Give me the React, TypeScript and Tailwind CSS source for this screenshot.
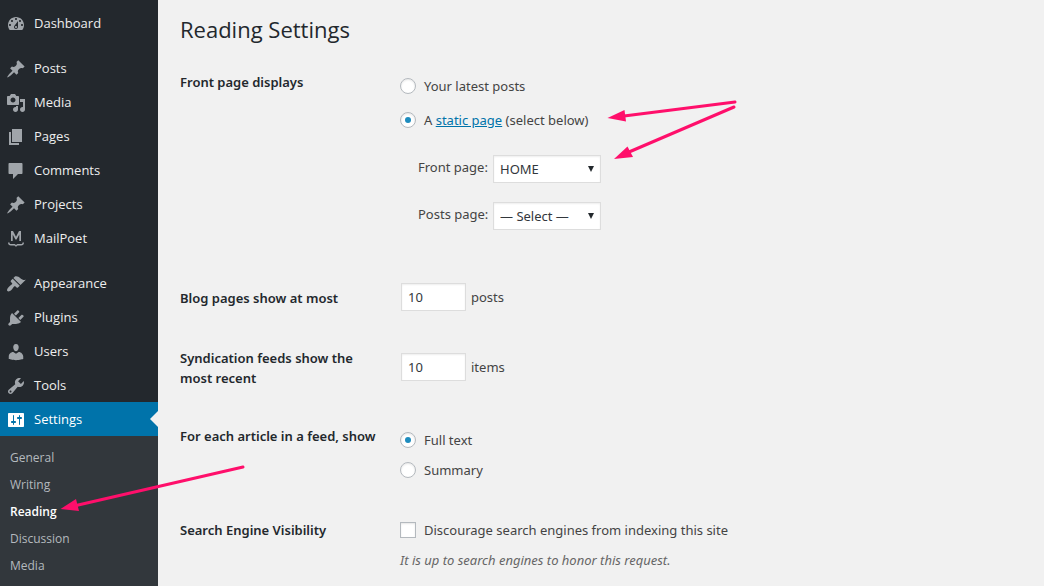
import { JSX, ReactNode } from 'react';

interface MenuItem {
    name: string;
    icon: string;
    active?: boolean;
}

const PIN_ICON =
    'M10.44 3.02l1.82-1.82 6.36 6.35-1.83 1.82c-1.05-.68-2.48-.57-3.41.36l-.75.75c-.92.93-1.04 2.35-.35 3.41l-1.83 1.82-2.41-2.41-2.8 2.79c-.42.42-3.38 2.71-3.8 2.29s1.86-3.39 2.28-3.81l2.79-2.79L4.1 9.36l1.83-1.82c1.05.69 2.48.57 3.4-.36l.75-.75c.93-.92 1.05-2.35.36-3.41z';

// Each inner array is one block of the menu, blocks are separated by a gap
const menuGroups: MenuItem[][] = [
    [
        {
            name: 'Dashboard',
            icon: 'M3.76 16h12.48c1.1-1.37 1.76-3.11 1.76-5 0-4.42-3.58-8-8-8s-8 3.58-8 8c0 1.89.66 3.63 1.76 5zM10 4c.55 0 1 .45 1 1s-.45 1-1 1-1-.45-1-1 .45-1 1-1zM6 6c.55 0 1 .45 1 1s-.45 1-1 1-1-.45-1-1 .45-1 1-1zm8 0c.55 0 1 .45 1 1s-.45 1-1 1-1-.45-1-1 .45-1 1-1zm-5.37 5.55L12 7v6c0 1.1-.9 2-2 2s-2-.9-2-2c0-.57.24-1.08.63-1.45zM4 10c.55 0 1 .45 1 1s-.45 1-1 1-1-.45-1-1 .45-1 1-1zm12 0c.55 0 1 .45 1 1s-.45 1-1 1-1-.45-1-1 .45-1 1-1zm-5 3c0-.55-.45-1-1-1s-1 .45-1 1 .45 1 1 1 1-.45 1-1z',
        },
    ],
    [
        { name: 'Posts', icon: PIN_ICON },
        {
            name: 'Media',
            icon: 'M13 11V4c0-.55-.45-1-1-1h-1.67L9 1H5L3.67 3H2c-.55 0-1 .45-1 1v7c0 .55.45 1 1 1h10c.55 0 1-.45 1-1zM7 4.5c1.38 0 2.5 1.12 2.5 2.5S8.38 9.5 7 9.5 4.5 8.38 4.5 7 5.62 4.5 7 4.5zM14 6h5v10.5c0 1.38-1.12 2.5-2.5 2.5S14 17.88 14 16.5s1.12-2.5 2.5-2.5c.17 0 .34.02.5.05V9h-3V6zm-4 8.05V13h2v3.5c0 1.38-1.12 2.5-2.5 2.5S7 17.88 7 16.5 8.12 14 9.5 14c.17 0 .34.02.5.05z',
        },
        { name: 'Pages', icon: 'M6 15V2h10v13H6zm-1 1h8v2H3V5h2v11z' },
        {
            name: 'Comments',
            icon: 'M3.5 2h12c.55 0 1 .45 1 1v9c0 .55-.45 1-1 1H12l-5 5v-5H3.5c-.55 0-1-.45-1-1V3c0-.55.45-1 1-1z',
        },
        { name: 'Projects', icon: PIN_ICON },
        {
            name: 'MailPoet',
            icon: 'M5 12V2h2l3 5.8L13 2h2v10h-1.700V5.600L10.600 10.600H9.400L6.700 5.600V12zM2 13.500h1.500c0 1 .5 1.500 1.500 1.500h2.700c1.200 0 1.900.4 2.300 1.200.4-.8 1.100-1.200 2.300-1.200H15c1 0 1.500-.5 1.500-1.500H18c0 2-1.100 3-2.900 3h-2.600c-1.100 0-1.700.4-2.500 1.600-.8-1.200-1.400-1.600-2.500-1.600H4.900c-1.800 0-2.900-1-2.900-3z',
        },
    ],
    [
        {
            name: 'Appearance',
            icon: 'M14.48 11.06L7.41 3.99l1.5-1.5c.5-.56 2.3-.47 3.51.32 1.21.8 1.43 1.28 2.91 2.1 1.18.64 2.45 1.26 4.45.85zm-.71.71L6.7 4.7 4.93 6.47c-.39.39-.39 1.02 0 1.41l1.06 1.06c.39.39.39 1.03 0 1.42-.6.6-1.43 1.11-2.21 1.69-.35.26-.7.53-1.01.84C1.43 14.23.4 16.08 1.4 17.07c.99 1 2.84-.03 4.18-1.36.31-.31.58-.66.85-1.02.57-.78 1.08-1.61 1.69-2.21.39-.39 1.02-.39 1.41 0l1.06 1.06c.39.39 1.02.39 1.41 0z',
        },
        {
            name: 'Plugins',
            icon: 'M13.11 4.36L9.87 7.6 8 5.73l3.24-3.24c.35-.34 1.05-.2 1.56.32.52.51.66 1.21.31 1.55zm-8 1.77l.91-1.12 9.01 9.01-1.19.84c-.71.71-2.63 1.16-3.82 1.16H6.14L4.9 17.26c-.59.59-1.54.59-2.12 0-.59-.58-.59-1.53 0-2.12l1.24-1.24v-3.88c0-1.13.4-3.19 1.09-3.89zm7.26 3.97l3.24-3.24c.34-.35 1.04-.21 1.55.31.52.51.66 1.21.31 1.55l-3.24 3.25z',
        },
        {
            name: 'Users',
            icon: 'M10 9.25c-2.27 0-2.73-3.44-2.73-3.44C7 4.02 7.82 2 9.97 2c2.16 0 2.98 2.02 2.71 3.81 0 0-.41 3.44-2.68 3.44zm0 2.57L12.72 10c2.39 0 4.52 2.33 4.52 4.53v2.49s-3.65 1.13-7.24 1.13c-3.65 0-7.24-1.13-7.24-1.13v-2.49c0-2.25 1.94-4.48 4.47-4.48z',
        },
        {
            name: 'Tools',
            icon: 'M16.68 9.77c-1.34 1.34-3.3 1.67-4.95.99l-5.41 6.52c-.99.99-2.59.99-3.58 0s-.99-2.59 0-3.57l6.52-5.42c-.68-1.65-.35-3.61.99-4.95 1.28-1.28 3.12-1.62 4.72-1.06l-2.89 2.89 2.82 2.82 2.86-2.87c.53 1.58.18 3.39-1.08 4.65zM3.81 16.21c.4.39 1.04.39 1.43 0 .4-.4.4-1.04 0-1.43-.39-.4-1.03-.4-1.43 0-.39.39-.39 1.03 0 1.43z',
        },
        {
            name: 'Settings',
            active: true,
            icon: 'M18 16V4c0-.55-.45-1-1-1H3c-.55 0-1 .45-1 1v12c0 .55.45 1 1 1h14c.55 0 1-.45 1-1zM8 11h1c.55 0 1 .45 1 1s-.45 1-1 1H8v1.5c0 .28-.22.5-.5.5s-.5-.22-.5-.5V13H6c-.55 0-1-.45-1-1s.45-1 1-1h1V5.5c0-.28.22-.5.5-.5s.5.22.5.5V11zm5-2h-1c-.55 0-1-.45-1-1s.45-1 1-1h1V5.5c0-.28.22-.5.5-.5s.5.22.5.5V7h1c.55 0 1 .45 1 1s-.45 1-1 1h-1v5.5c0 .28-.22.5-.5.5s-.5-.22-.5-.5V9z',
        },
    ],
];

const submenu = ['General', 'Writing', 'Reading', 'Discussion', 'Media'];

const Sidebar = (): JSX.Element => (
    <nav className="flex w-[158px] shrink-0 flex-col bg-[#23282d] pt-1.5">
        <div className="flex flex-col gap-[11px]">
            {menuGroups.map((group) => (
                <ul key={group[0].name}>
                    {group.map((item) => (
                        <li key={item.name} className="relative">
                            <a
                                href="#"
                                className={`flex h-[34px] items-center gap-2 pt-px pl-1.5 text-[13px] ${
                                    item.active ? 'bg-[#0073aa] text-white' : 'text-[#eeeeee]'
                                }`}
                            >
                                <svg
                                    viewBox="0 0 20 20"
                                    className={`size-5 shrink-0 ${item.active ? 'fill-white' : 'fill-[#a0a5aa]'}`}
                                    aria-hidden="true"
                                >
                                    <path d={item.icon} />
                                </svg>
                                {item.name}
                            </a>
                            {item.active && (
                                <span className="absolute top-[9px] right-0 border-8 border-transparent border-r-[#f1f1f1]" />
                            )}
                        </li>
                    ))}
                </ul>
            ))}
        </div>

        {/* Settings submenu */}
        <ul className="flex-1 bg-[#32373c] pt-2">
            {submenu.map((name) => (
                <li key={name}>
                    <a
                        href="#"
                        className={`block pl-2.5 text-[12px] leading-[27px] ${
                            name === 'Reading' ? 'font-semibold text-white' : 'text-[#b4b9be]'
                        }`}
                    >
                        {name}
                    </a>
                </li>
            ))}
        </ul>
    </nav>
);

interface RadioProps {
    name: string;
    id: string;
    checked?: boolean;
    children: ReactNode;
}

const Radio = ({ name, id, checked, children }: RadioProps): JSX.Element => (
    <div className="flex h-5 items-center gap-2">
        <input
            type="radio"
            id={id}
            name={name}
            defaultChecked={checked}
            className="flex size-4 appearance-none items-center justify-center rounded-full border border-[#b4b9be] bg-white shadow-[inset_0_1px_2px_rgba(0,0,0,0.1)] before:size-1.5 before:rounded-full checked:before:bg-[#1e8cbe]"
        />
        <label htmlFor={id}>{children}</label>
    </div>
);

interface PageSelectProps {
    id: string;
    label: string;
    options: string[];
}

const PageSelect = ({ id, label, options }: PageSelectProps): JSX.Element => (
    <li className="flex items-start gap-1">
        <label htmlFor={id} className="w-[71px] leading-6 whitespace-nowrap">
            {label}
        </label>
        <div className="relative">
            <select
                id={id}
                className="h-7 w-[108px] appearance-none border border-[#dddddd] bg-white pl-1.5 text-[13px] text-[#32373c] shadow-[inset_0_1px_2px_rgba(0,0,0,0.07)]"
            >
                {options.map((option) => (
                    <option key={option}>{option}</option>
                ))}
            </select>
            <svg viewBox="0 0 6 6" className="pointer-events-none absolute top-[11px] right-[7px] size-1.5 fill-[#23282d]">
                <path d="M0 0h6L3 6z" />
            </svg>
        </div>
    </li>
);

const CountInput = ({ id, unit }: { id: string; unit: string }): JSX.Element => (
    <div className="ml-px flex items-center gap-[5px]">
        <input
            type="text"
            inputMode="numeric"
            id={id}
            defaultValue="10"
            className="h-7 w-[65px] border border-[#dddddd] bg-white px-1.5 text-[13px] text-[#32373c] shadow-[inset_0_1px_2px_rgba(0,0,0,0.07)]"
        />
        <span>{unit}</span>
    </div>
);

const ROW = 'grid grid-cols-[200px_1fr] items-start gap-x-5';
const HEADING = 'text-[13px] leading-5 font-semibold text-[#23282d]';

const ReadingForm = (): JSX.Element => (
    <form className="mt-[26px] font-['Noto_Sans','Open_Sans',sans-serif] text-[13px] leading-5 text-[#444444]">
        <div className={ROW} role="radiogroup" aria-labelledby="front-heading">
            <h2 id="front-heading" className={HEADING}>
                Front page displays
            </h2>
            <div className="pt-1">
                <div className="flex flex-col gap-3.5">
                    <Radio name="show_on_front" id="front-posts">
                        Your latest posts
                    </Radio>
                    <Radio name="show_on_front" id="front-page" checked>
                        A{' '}
                        <a href="#" className="text-[#0073aa] underline">
                            static page
                        </a>{' '}
                        (select below)
                    </Radio>
                </div>
                <ul className="mt-[25px] ml-[18px] flex flex-col gap-[19px]">
                    <PageSelect id="page-on-front" label="Front page:" options={['HOME', '— Select —']} />
                    <PageSelect id="page-for-posts" label="Posts page:" options={['— Select —', 'HOME']} />
                </ul>
            </div>
        </div>

        <div className={`${ROW} mt-[53px]`}>
            <label htmlFor="posts-per-page" className={`${HEADING} pt-[5px]`}>
                Blog pages show at most
            </label>
            <CountInput id="posts-per-page" unit="posts" />
        </div>

        <div className={`${ROW} mt-[37px]`}>
            <label htmlFor="posts-per-rss" className={HEADING}>
                Syndication feeds show the most recent
            </label>
            <div className="pt-[5px]">
                <CountInput id="posts-per-rss" unit="items" />
            </div>
        </div>

        <div className={`${ROW} mt-[38px]`} role="radiogroup" aria-labelledby="feed-heading">
            <h2 id="feed-heading" className={HEADING}>
                For each article in a feed, show
            </h2>
            <div className="flex flex-col gap-2.5 pt-1">
                <Radio name="rss_use_excerpt" id="feed-full" checked>
                    Full text
                </Radio>
                <Radio name="rss_use_excerpt" id="feed-summary">
                    Summary
                </Radio>
            </div>
        </div>

        <div className={`${ROW} mt-10`}>
            <h2 className={HEADING}>Search Engine Visibility</h2>
            <div>
                <div className="flex h-5 items-center gap-2">
                    <input
                        type="checkbox"
                        id="blog-public"
                        className="size-4 appearance-none border border-[#b4b9be] bg-white shadow-[inset_0_1px_2px_rgba(0,0,0,0.1)] checked:bg-[#1e8cbe]"
                    />
                    <label htmlFor="blog-public">Discourage search engines from indexing this site</label>
                </div>
                <p className="mt-2.5 text-[#666666] italic">It is up to search engines to honor this request.</p>
            </div>
        </div>
    </form>
);

// Pink pointers drawn over the page
const Arrows = (): JSX.Element => (
    <svg
        viewBox="0 0 1044 586"
        className="pointer-events-none absolute top-0 left-0 h-[586px] w-[1044px] fill-[#ff0f6b] stroke-[#ff0f6b]"
        aria-hidden="true"
    >
        <g strokeWidth="3" strokeLinecap="round">
            <path d="M735 102L624 116" />
            <path d="M734 107L629 152" />
            <path d="M243 467L76 505.500" />
        </g>
        <g stroke="none">
            <path d="M607.500 118L624.500 110L626 121.500z" />
            <path d="M614 159L627.500 146.500L633 157z" />
            <path d="M60.500 509L76 499L79 511z" />
        </g>
    </svg>
);

const App = (): JSX.Element => {
    return (
        <div className="relative flex min-h-screen overflow-hidden bg-[#f1f1f1] font-['Open_Sans','Noto_Sans',sans-serif]">
            <Sidebar />
            <main className="flex-1 px-[22px] pt-3">
                <h1 className="text-[22px] leading-[34px] text-[#23282d]">Reading Settings</h1>
                <ReadingForm />
            </main>
            <Arrows />
        </div>
    );
};

export default App;
